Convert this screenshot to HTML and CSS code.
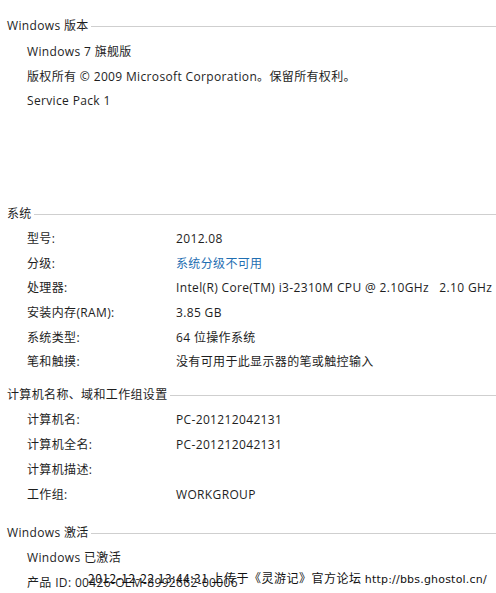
FILE: index.html
```html
<!DOCTYPE html>
<html lang="zh-CN">
<head>
<meta charset="utf-8">
<title>系统</title>
<link rel="stylesheet" href="styles.css">
</head>
<body>
<div class="page">
  <section class="sec sec-ver">
    <div class="head"><span>Windows 版本</span><i></i></div>
    <div class="row"><span class="lab">Windows 7 旗舰版</span></div>
    <div class="row"><span class="lab">版权所有 © 2009 Microsoft Corporation。保留所有权利。</span></div>
    <div class="row"><span class="lab">Service Pack 1</span></div>
  </section>
  <section class="sec sec-sys">
    <div class="head"><span>系统</span><i></i></div>
    <div class="row tight"><span class="lab">型号:</span><span class="val">2012.08</span></div>
    <div class="row tight"><span class="lab">分级:</span><span class="val link">系统分级不可用</span></div>
    <div class="row tight"><span class="lab">处理器:</span><span class="val">Intel(R) Core(TM) i3-2310M CPU @ 2.10GHz&nbsp;&nbsp;&nbsp;2.10 GHz</span></div>
    <div class="row tight"><span class="lab">安装内存(RAM):</span><span class="val">3.85 GB</span></div>
    <div class="row tight"><span class="lab">系统类型:</span><span class="val">64 位操作系统</span></div>
    <div class="row tight"><span class="lab">笔和触摸:</span><span class="val">没有可用于此显示器的笔或触控输入</span></div>
  </section>
  <section class="sec sec-pc">
    <div class="head"><span>计算机名称、域和工作组设置</span><i></i></div>
    <div class="row"><span class="lab">计算机名:</span><span class="val">PC-201212042131</span></div>
    <div class="row"><span class="lab">计算机全名:</span><span class="val">PC-201212042131</span></div>
    <div class="row"><span class="lab">计算机描述:</span><span class="val"></span></div>
    <div class="row"><span class="lab">工作组:</span><span class="val">WORKGROUP</span></div>
  </section>
  <section class="sec sec-act">
    <div class="head"><span>Windows 激活</span><i></i></div>
    <div class="row"><span class="lab">Windows 已激活</span></div>
    <div class="row"><span class="lab">产品 ID: 00426-OEM-8992662-00006</span></div>
  </section>
  <div class="mark">2012-12-22 13:44:31 上传于《灵游记》官方论坛 <span class="url">http://bbs.ghostol.cn/</span></div>
</div>
</body>
</html>
```
FILE: styles.css
```css
html, body {
  margin: 0;
  padding: 0;
  background: #ffffff;
}
body {
  width: 496px;
  height: 593px;
  overflow: hidden;
  font-family: "Open Sans", "Noto Sans CJK SC", sans-serif;
  font-size: 12px;
  letter-spacing: 0.35px;
  color: #1e1e1e;
}
.page {
  position: relative;
  height: 593px;
  padding-top: 12px;
  box-sizing: border-box;
}
.head {
  display: flex;
  align-items: center;
  height: 26px;
  padding-left: 7px;
}
.head span {
  white-space: nowrap;
}
.head i {
  flex: 1;
  height: 1px;
  background: #cfcfcf;
  margin-left: 2px;
  margin-top: 3px;
}
.row {
  display: flex;
  align-items: center;
  height: 25px;
  padding-left: 27px;
  white-space: nowrap;
}
.row.tight {
  height: 24.6px;
}
.lab {
  width: 149px;
}
.sec-ver .lab, .sec-act .lab {
  width: auto;
}
.val {
  flex: 1;
}
.link {
  color: #1f6fb2;
}
.sec-sys {
  margin-top: 87px;
}
.sec-pc {
  margin-top: 7px;
}
.sec-act {
  margin-top: 12px;
}
.mark {
  position: absolute;
  left: 88px;
  top: 569px;
  font-family: "Noto Sans CJK SC", sans-serif;
  font-size: 12px;
  color: #111111;
  white-space: nowrap;
  letter-spacing: 0.5px;
}
.url {
  font-family: "DejaVu Sans", sans-serif;
  font-size: 11px;
  letter-spacing: 0.2px;
}
```
